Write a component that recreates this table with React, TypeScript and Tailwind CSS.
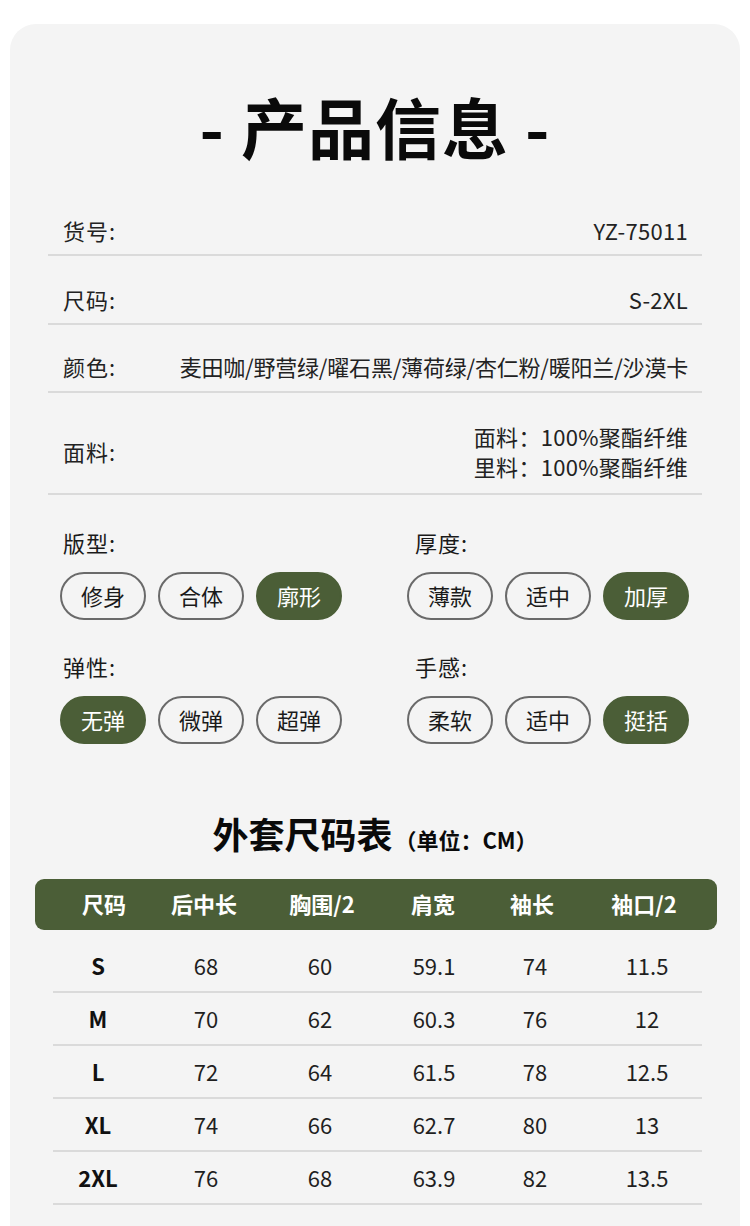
const font = "font-['Noto_Sans_CJK_SC','Noto_Sans',sans-serif]";

const infoRows = [
  { label: "货号:", value: ["YZ-75011"] },
  { label: "尺码:", value: ["S-2XL"] },
  { label: "颜色:", value: ["麦田咖/野营绿/曜石黑/薄荷绿/杏仁粉/暖阳兰/沙漠卡"] },
  { label: "面料:", value: ["面料：100%聚酯纤维", "里料：100%聚酯纤维"] },
];

const options = [
  [
    { title: "版型:", items: ["修身", "合体", "廓形"], active: 2 },
    { title: "厚度:", items: ["薄款", "适中", "加厚"], active: 2 },
  ],
  [
    { title: "弹性:", items: ["无弹", "微弹", "超弹"], active: 0 },
    { title: "手感:", items: ["柔软", "适中", "挺括"], active: 2 },
  ],
];

const headers = ["尺码", "后中长", "胸围/2", "肩宽", "袖长", "袖口/2"];

const sizes = [
  ["S", "68", "60", "59.1", "74", "11.5"],
  ["M", "70", "62", "60.3", "76", "12"],
  ["L", "72", "64", "61.5", "78", "12.5"],
  ["XL", "74", "66", "62.7", "80", "13"],
  ["2XL", "76", "68", "63.9", "82", "13.5"],
];

function Pill({ text, on }: { text: string; on: boolean }) {
  return (
    <div
      className={
        on
          ? "w-[86px] h-[48px] rounded-full bg-[#4b5e37] border-2 border-[#4b5e37] text-white flex items-center justify-center text-[22px]"
          : "w-[86px] h-[48px] rounded-full border-2 border-[#6a6a6a] text-[#1a1a1a] flex items-center justify-center text-[22px]"
      }
    >
      <span className="-mt-[2px]">{text}</span>
    </div>
  );
}

export default function App() {
  return (
    <div className={`bg-white w-[750px] h-[1226px] overflow-hidden pt-[24px] px-[10px] ${font}`}>
      <div className="bg-[#f4f4f4] rounded-t-[26px] h-[1202px]">
        {/* title */}
        <div className="pt-[61px] h-[163px] flex justify-center">
          <h1 className="text-[66px] leading-[80px] font-bold text-[#0a0a0a] tracking-[1px]">
            - 产品信息 -
          </h1>
        </div>

        {/* info rows */}
        <div className="ml-[38px] w-[654px]">
          {infoRows.map((r, i) => (
            <div
              key={r.label}
              className={`flex items-center justify-between border-b-2 border-[#dadada] text-[22px] text-[#222] ${
                r.value.length > 1
                  ? "pt-[28px] pb-[12px]"
                  : i === 2
                    ? "pt-[26px] pb-[10px]"
                    : "pt-[28px] pb-[9px]"
              }`}
            >
              <div className="pl-[15px] leading-[30px] tracking-[1px]">{r.label}</div>
              <div className="pr-[14px] text-right leading-[30px]">
                {r.value.map((v) => (
                  <div key={v} className={i === 2 ? "tracking-[-0.2px]" : "tracking-[0.3px]"}>
                    {v}
                  </div>
                ))}
              </div>
            </div>
          ))}
        </div>

        {/* options */}
        <div className="pt-[32px]">
          {options.map((row, i) => (
            <div key={i} className={`flex ${i === 1 ? "mt-[31px]" : ""}`}>
              {row.map((g, j) => (
                <div key={g.title} className={j === 0 ? "ml-[50px] w-[347px]" : ""}>
                  <div
                    className={`${j === 0 ? "pl-[3px]" : "pl-[8px]"} text-[22px] leading-[30px] text-[#1a1a1a] tracking-[1px]`}
                  >
                    {g.title}
                  </div>
                  <div className="mt-[15px] flex gap-[12px]">
                    {g.items.map((t, k) => (
                      <Pill key={t} text={t} on={k === g.active} />
                    ))}
                  </div>
                </div>
              ))}
            </div>
          ))}
        </div>

        {/* size chart title */}
        <div className="mt-[67px] flex justify-center items-baseline text-[#0a0a0a] font-bold">
          <span className="text-[36px] leading-[44px]">外套尺码表</span>
          <span className="text-[22px] leading-[44px] ml-[2px]">（单位：CM）</span>
        </div>

        {/* header */}
        <div className="mt-[18px] ml-[25px] w-[682px] h-[51px] rounded-[9px] bg-[#4b5e37] flex items-center">
          <div className="ml-[18px] grid grid-cols-[102px_98px_138px_84px_114px_110px] text-white font-bold text-[22px] -mt-[2px]">
            {headers.map((h) => (
              <div key={h} className="text-center">
                {h}
              </div>
            ))}
          </div>
        </div>

        {/* rows */}
        <div className="ml-[43px] w-[649px] mt-[10px]">
          {sizes.map((r) => (
            <div
              key={r[0]}
              className="h-[53px] border-b-2 border-[#dadada] grid grid-cols-[90px_126px_102px_126px_76px_148px] items-center text-[22px] text-[#1f1f1f]"
            >
              {r.map((c, k) => (
                <div key={k} className={`text-center ${k === 0 ? "font-bold text-[#111]" : ""}`}>
                  {c}
                </div>
              ))}
            </div>
          ))}
        </div>
      </div>
    </div>
  );
}
